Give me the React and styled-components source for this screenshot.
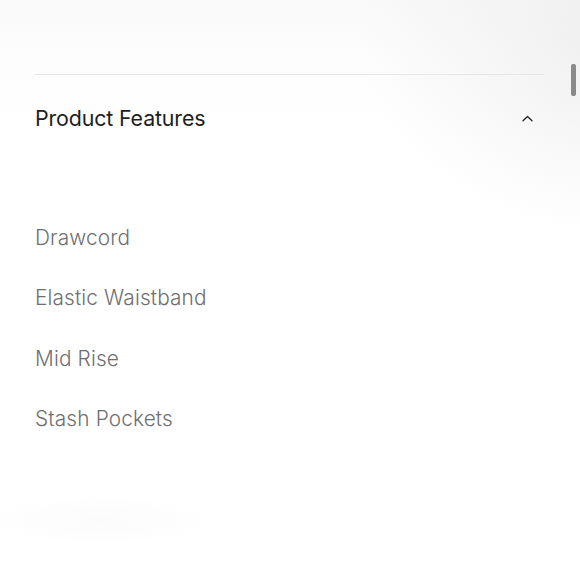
import styled, { createGlobalStyle } from "styled-components"

const Global = createGlobalStyle`
  html, body {
    margin: 0;
    padding: 0;
    background: #ffffff;
  }
  body {
    font-family: Inter, "Liberation Sans", sans-serif;
    -webkit-font-smoothing: antialiased;
  }
`

const Page = styled.div`
  position: relative;
  width: 580px;
  height: 580px;
  overflow: hidden;
  background:
    radial-gradient(ellipse 120px 25px at 100px 520px, #fbfbfb 0%, rgba(255,255,255,0) 100%),
    radial-gradient(ellipse 280px 200px at 640px 40px, #eeeeee 0%, rgba(255,255,255,0) 100%),
    linear-gradient(180deg, #f9f9f9 0px, #fdfdfd 60px, #ffffff 140px);
`

const Section = styled.section`
  padding: 74px 36px 0 35px;
`

const Divider = styled.div`
  height: 1px;
  background: #e6e6e6;
`

const Header = styled.div`
  display: flex;
  align-items: center;
  justify-content: space-between;
  height: 86px;
  padding-right: 11px;
`

const Title = styled.h2`
  margin: 0;
  font-size: 21.4px;
  font-weight: 400;
  color: #1e1e1e;
  letter-spacing: -0.15px;
`

const List = styled.ul`
  list-style: none;
  margin: 0;
  padding: 63px 0 0;
  display: flex;
  flex-direction: column;
`

const Item = styled.li`
  height: 60.3px;
  line-height: 28px;
  font-size: 20.8px;
  font-weight: 300;
  color: #6f6f6f;
  letter-spacing: 0.15px;
`

const Scrollbar = styled.div`
  position: absolute;
  top: 64px;
  right: 4px;
  width: 5px;
  height: 32px;
  border-radius: 2px;
  background: #8a8a8a;
`

function Chevron () {
  return (
    <svg width="11" height="7" viewBox="0 0 11 7" fill="none">
      <path d="M1 5.8 L5.5 1.5 L10 5.8" stroke="#222" strokeWidth="1.3" strokeLinecap="round" strokeLinejoin="round"/>
    </svg>
  )
}

const features = ["Drawcord", "Elastic Waistband", "Mid Rise", "Stash Pockets"]

function App () {
  return (
    <Page>
      <Global/>
      <Section>
        <Divider/>
        <Header>
          <Title>Product Features</Title>
          <Chevron/>
        </Header>
        <List>
          {features.map(f => <Item key={f}>{f}</Item>)}
        </List>
      </Section>
      <Scrollbar/>
    </Page>
  )
}

export default App
